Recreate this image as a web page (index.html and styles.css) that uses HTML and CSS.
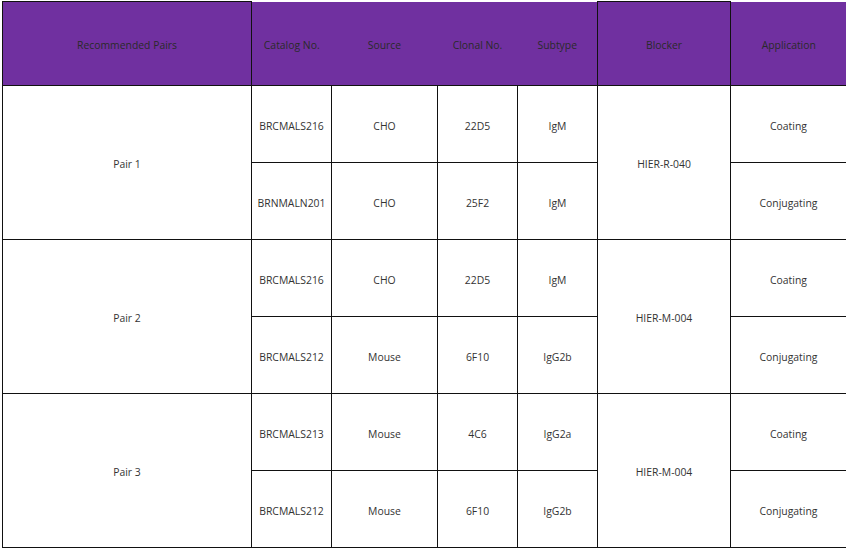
FILE: index.html
```html
<!DOCTYPE html>
<html>
<head>
<meta charset="utf-8">
<link rel="stylesheet" href="styles.css">
</head>
<body>
<table class="pairs">
  <colgroup>
    <col class="c-pair"><col class="c-cat"><col class="c-src"><col class="c-clone"><col class="c-sub"><col class="c-block"><col class="c-app">
  </colgroup>
  <thead>
    <tr>
      <th class="h-pair">Recommended Pairs</th>
      <th class="h-mid">Catalog No.</th>
      <th class="h-mid">Source</th>
      <th class="h-mid">Clonal No.</th>
      <th class="h-mid">Subtype</th>
      <th class="h-block">Blocker</th>
      <th class="h-app">Application</th>
    </tr>
  </thead>
  <tbody>
    <tr><td rowspan="2">Pair 1</td><td>BRCMALS216</td><td>CHO</td><td>22D5</td><td>IgM</td><td rowspan="2">HIER-R-040</td><td>Coating</td></tr>
    <tr><td>BRNMALN201</td><td>CHO</td><td>25F2</td><td>IgM</td><td>Conjugating</td></tr>
    <tr><td rowspan="2">Pair 2</td><td>BRCMALS216</td><td>CHO</td><td>22D5</td><td>IgM</td><td rowspan="2">HIER-M-004</td><td>Coating</td></tr>
    <tr><td>BRCMALS212</td><td>Mouse</td><td>6F10</td><td>IgG2b</td><td>Conjugating</td></tr>
    <tr><td rowspan="2">Pair 3</td><td>BRCMALS213</td><td>Mouse</td><td>4C6</td><td>IgG2a</td><td rowspan="2">HIER-M-004</td><td>Coating</td></tr>
    <tr><td>BRCMALS212</td><td>Mouse</td><td>6F10</td><td>IgG2b</td><td>Conjugating</td></tr>
  </tbody>
</table>
</body>
</html>
```
FILE: styles.css
```css
html, body {
  margin: 0;
  padding: 0;
  background: #fff;
}
body {
  padding: 1px 0 0 2px;
  font-family: "Open Sans", "Noto Sans", sans-serif;
  font-size: 10.4px;
  color: #333;
}
.pairs {
  border-collapse: collapse;
  table-layout: fixed;
  width: 844px;
}
.c-pair { width: 249px; }
.c-cat { width: 80px; }
.c-src { width: 106px; }
.c-clone { width: 80px; }
.c-sub { width: 80px; }
.c-block { width: 133px; }
.c-app { width: 116px; }
.pairs th {
  background: #7030a0;
  color: #2a2a2a;
  font-weight: normal;
  height: 80px;
  padding: 3px 0 0;
  text-align: center;
  vertical-align: middle;
  border: none;
  border-bottom: 1px solid #111;
}
.pairs th.h-pair {
  border: 1px solid #111;
}
.pairs th.h-block {
  border: 1px solid #111;
}
.pairs td {
  border: 1px solid #111;
  height: 73px;
  padding: 3px 0 0;
  text-align: center;
  vertical-align: middle;
}
```
